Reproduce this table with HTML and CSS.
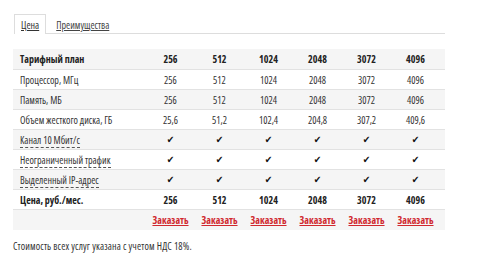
FILE: index.html
```html
<!DOCTYPE html>
<html lang="ru">
<head>
<meta charset="utf-8">
<title>Тарифы</title>
<link rel="stylesheet" href="styles.css">
</head>
<body>
<div class="page">
  <div class="tabs">
    <a class="tab active" href="#">Цена</a>
    <a class="tab" href="#">Преимущества</a>
  </div>
  <table class="prices">
    <colgroup>
      <col class="c-name"><col class="c-v"><col class="c-v"><col class="c-v"><col class="c-v"><col class="c-v"><col class="c-last">
    </colgroup>
    <tr class="grey bold first">
      <td class="name">Тарифный план</td><td>256</td><td>512</td><td>1024</td><td>2048</td><td>3072</td><td class="last">4096</td>
    </tr>
    <tr>
      <td class="name">Процессор, МГц</td><td>256</td><td>512</td><td>1024</td><td>2048</td><td>3072</td><td class="last">4096</td>
    </tr>
    <tr class="grey">
      <td class="name">Память, МБ</td><td>256</td><td>512</td><td>1024</td><td>2048</td><td>3072</td><td class="last">4096</td>
    </tr>
    <tr>
      <td class="name">Объем жесткого диска, ГБ</td><td>25,6</td><td>51,2</td><td>102,4</td><td>204,8</td><td>307,2</td><td class="last">409,6</td>
    </tr>
    <tr class="grey">
      <td class="name"><span class="dash">Канал 10 Мбит/с</span></td><td class="chk">✔</td><td class="chk">✔</td><td class="chk">✔</td><td class="chk">✔</td><td class="chk">✔</td><td class="chk last">✔</td>
    </tr>
    <tr>
      <td class="name"><span class="dash">Неограниченный трафик</span></td><td class="chk">✔</td><td class="chk">✔</td><td class="chk">✔</td><td class="chk">✔</td><td class="chk">✔</td><td class="chk last">✔</td>
    </tr>
    <tr class="grey">
      <td class="name"><span class="dash">Выделенный IP-адрес</span></td><td class="chk">✔</td><td class="chk">✔</td><td class="chk">✔</td><td class="chk">✔</td><td class="chk">✔</td><td class="chk last">✔</td>
    </tr>
    <tr class="bold">
      <td class="name">Цена, руб./мес.</td><td>256</td><td>512</td><td>1024</td><td>2048</td><td>3072</td><td class="last">4096</td>
    </tr>
    <tr class="grey order">
      <td class="name"></td><td><a href="#">Заказать</a></td><td><a href="#">Заказать</a></td><td><a href="#">Заказать</a></td><td><a href="#">Заказать</a></td><td><a href="#">Заказать</a></td><td class="last"><a href="#">Заказать</a></td>
    </tr>
  </table>
  <p class="note">Стоимость всех услуг указана с учетом НДС 18%.</p>
</div>
</body>
</html>
```
FILE: styles.css
```css
html, body {
  margin: 0;
  padding: 0;
  background: #fff;
}
body {
  font-family: "Open Sans", "Liberation Sans", Arial, sans-serif;
  font-stretch: 78%;
  font-size: 10px;
  color: #333;
}
.page {
  padding: 14px 0 0 13px;
  width: 432px;
}
.tabs {
  display: flex;
  margin-left: 1px;
  border-bottom: 1px solid #ddd;
  height: 19px;
}
.tab {
  display: block;
  height: 19px;
  line-height: 20px;
  padding: 0 6px;
  color: #444;
  text-decoration: underline;
  box-sizing: border-box;
  border: 1px solid transparent;
  border-bottom: none;
  margin-right: 3px;
}
.tab.active {
  border-color: #ddd;
  background: #fff;
  height: 20px;
  color: #333;
}
.prices {
  margin-top: 15px;
  border-collapse: collapse;
  table-layout: fixed;
  width: 432px;
}
.c-name { width: 133px; }
.c-v { width: 49px; }
.c-last { width: 54px; }
.prices td {
  height: 19px;
  padding: 0;
  border-top: 1px solid #e2e2e2;
  text-align: center;
  vertical-align: middle;
  white-space: nowrap;
}
.prices td.last {
  padding-right: 5px;
}
.prices tr.first td {
  border-top: none;
  height: 20px;
}
.prices td.name {
  text-align: left;
  padding-left: 7px;
}
.grey td {
  background: #f5f5f5;
}
.bold td {
  font-weight: bold;
  color: #222;
}
.dash {
  border-bottom: 1px dashed #555;
}
.chk {
  font-family: "DejaVu Sans", sans-serif;
  font-size: 10px;
  color: #111;
}
.order td {
  height: 20px;
}
.order a {
  color: #d0282e;
  font-weight: bold;
  text-decoration: underline;
}
.note {
  margin: 9px 0 0 0;
  color: #333;
  letter-spacing: 0.15px;
}
```
